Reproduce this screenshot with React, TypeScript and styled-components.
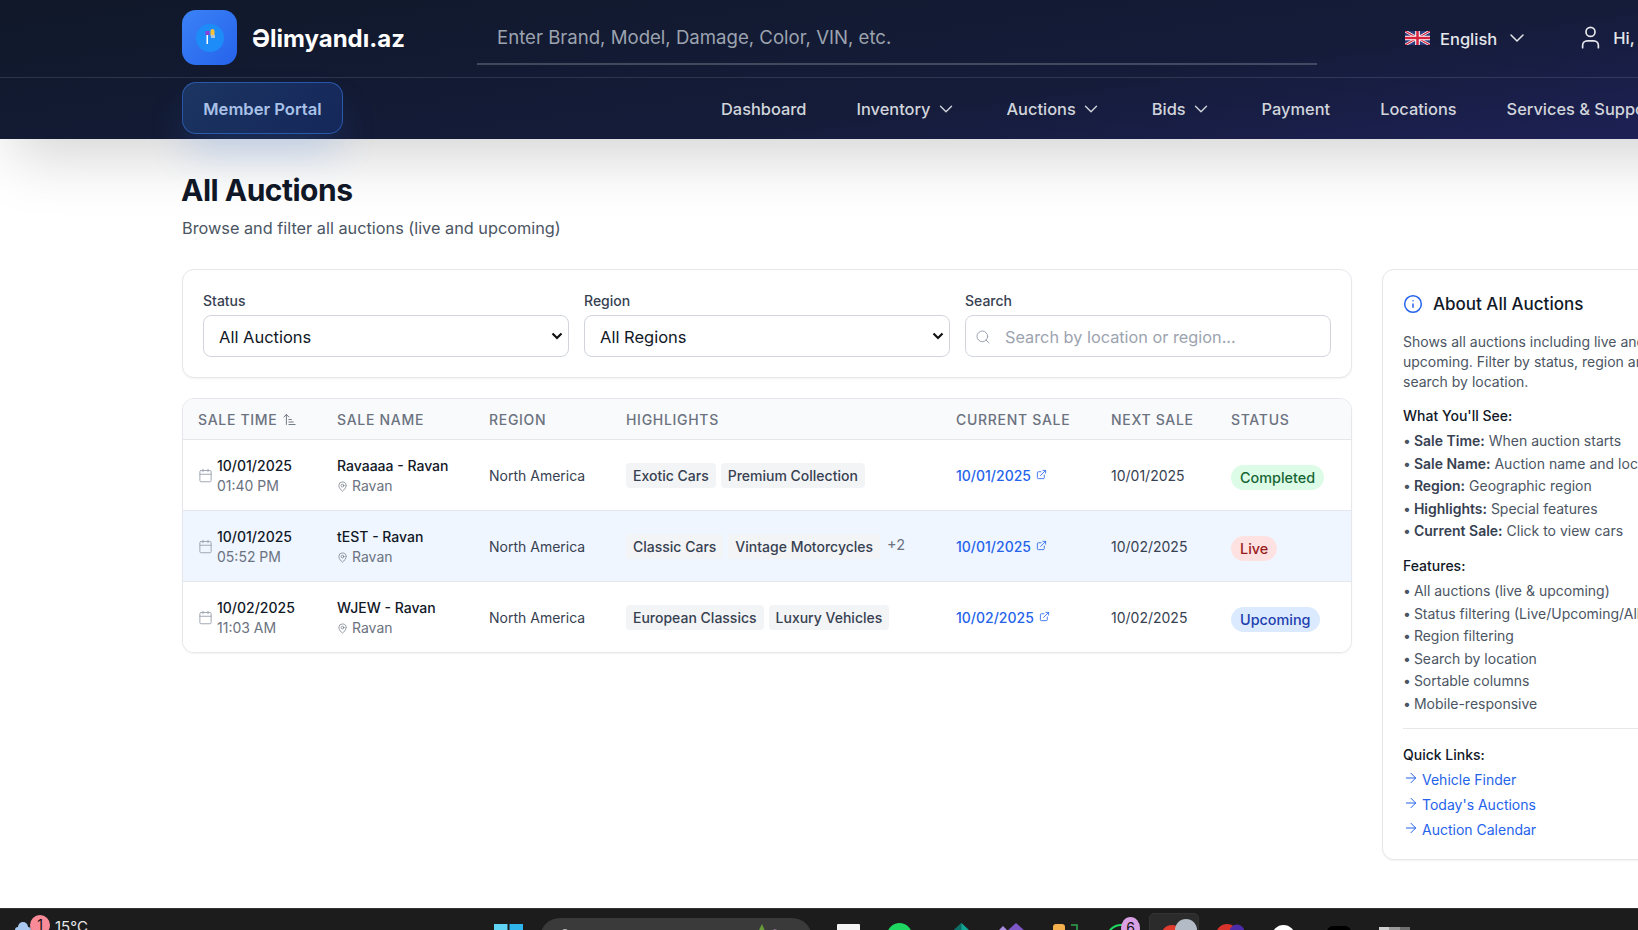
import React from "react";
import styled, {createGlobalStyle} from "styled-components";
import {ChevronDown, User, Search, Calendar, MapPin, ExternalLink, Info, ArrowRight, ArrowUpNarrowWide} from "lucide-react";

const GlobalStyle = createGlobalStyle`
  html, body {
    margin: 0;
    padding: 0;
    height: 930px;
    overflow: hidden;
    background: #fff;
    font-family: Inter, "Noto Sans", "Liberation Sans", sans-serif;
    color: #111827;
  }
  * {
    box-sizing: border-box;
  }
`;

const Page = styled.div`
  width: 1638px;
  height: 930px;
  display: flex;
  flex-direction: column;
  overflow: hidden;
`;

const Header = styled.header`
  position: relative;
  z-index: 2;
  flex: none;
  width: 1800px;
  height: 139px;
  background: linear-gradient(172deg, #101829 0%, #151c3a 60%, #1f2159 100%);
  box-shadow: 0 30px 60px -12px rgba(0, 0, 0, 0.17);
`;

const TopBar = styled.div`
  height: 78px;
  padding: 10px 0 0 182px;
  display: flex;
  align-items: flex-start;
  border-bottom: 1px solid rgba(255, 255, 255, 0.12);
`;

const Logo = styled.div`
  width: 55px;
  height: 55px;
  flex: none;
  border-radius: 14px;
  background: linear-gradient(135deg, #3b82f6, #2563eb);
  display: flex;
  align-items: center;
  justify-content: center;
`;

const Brand = styled.div`
  width: 225px;
  flex: none;
  margin-left: 15px;
  height: 55px;
  line-height: 57px;
  font-size: 24px;
  font-weight: 700;
  color: #fff;
`;

const TopSearch = styled.div`
  width: 840px;
  flex: none;
  height: 55px;
  padding: 0 20px;
  line-height: 54px;
  border-bottom: 2px solid rgba(255, 255, 255, 0.2);
  font-size: 18.6px;
  color: #9ca3af;
`;

const Lang = styled.div`
  margin-left: 88px;
  flex: none;
  height: 55px;
  display: flex;
  align-items: center;
  color: #e5e7eb;
  font-size: 16.5px;
  font-weight: 500;
`;

const LangName = styled.span`
  margin: 2px 8px 0 10px;
`;

const Greeting = styled.div`
  margin-left: 48px;
  flex: none;
  height: 55px;
  display: flex;
  align-items: center;
  gap: 9px;
  color: #e5e7eb;
  font-size: 16.5px;
  font-weight: 500;
  white-space: nowrap;
`;

const NavBar = styled.nav`
  height: 61px;
  padding: 4px 0 0 182px;
  display: flex;
  align-items: flex-start;
`;

const PortalButton = styled.div`
  width: 161px;
  height: 52px;
  flex: none;
  padding-top: 2px;
  border-radius: 14px;
  border: 1px solid rgba(59, 130, 246, 0.5);
  background: linear-gradient(135deg, #1c3561, #14275a);
  box-shadow: 0 22px 40px -6px rgba(59, 130, 246, 0.22);
  color: #a9c1e8;
  font-size: 16.6px;
  font-weight: 600;
  display: flex;
  align-items: center;
  justify-content: center;
`;

const NavLinks = styled.div`
  margin-left: 378px;
  flex: none;
  height: 52px;
  padding-top: 2px;
  display: flex;
  align-items: center;
  gap: 50px;
  white-space: nowrap;
`;

const NavLink = styled.span`
  display: flex;
  align-items: center;
  gap: 4px;
  color: #d1d5db;
  font-size: 16.4px;
  font-weight: 500;
`;

const Main = styled.main`
  flex: 1;
  padding: 30px 0 0 182px;
  min-height: 0;
`;

const Title = styled.h1`
  margin: 0 0 0 -1px;
  font-size: 30px;
  line-height: 42px;
  font-weight: 700;
  letter-spacing: -0.5px;
  color: #111827;
`;

const Subtitle = styled.p`
  margin: 3px 0 0;
  font-size: 16.3px;
  line-height: 28px;
  color: #4b5563;
`;

const Columns = styled.div`
  margin-top: 27px;
  display: flex;
  align-items: flex-start;
  gap: 30px;
`;

const Left = styled.div`
  width: 1170px;
  flex: none;
`;

const Card = styled.section`
  background: #fff;
  border: 1px solid #e5e7eb;
  border-radius: 12px;
  box-shadow: 0 1px 2px rgba(0, 0, 0, 0.05);
`;

const Filters = styled(Card)`
  height: 109px;
  padding: 20px;
  display: grid;
  grid-template-columns: repeat(3, 1fr);
  gap: 15px;
`;

const Field = styled.div`
  display: flex;
  flex-direction: column;
`;

const FieldLabel = styled.label`
  height: 25px;
  line-height: 21px;
  font-size: 14px;
  font-weight: 500;
  color: #374151;
`;

const Select = styled.select`
  width: 100%;
  height: 42px;
  padding: 2px 30px 0 15px;
  border: 1px solid #d1d5db;
  border-radius: 8px;
  appearance: none;
  background-color: #fff;
  background-image: url("data:image/svg+xml,%3Csvg xmlns='http://www.w3.org/2000/svg' width='12' height='8' viewBox='0 0 12 8'%3E%3Cpath d='M1.5 1.5L6 6l4.5-4.5' fill='none' stroke='%23111' stroke-width='2.2'/%3E%3C/svg%3E");
  background-repeat: no-repeat;
  background-position: right 5px center;
  font-family: inherit;
  font-size: 16.5px;
  color: #111827;
`;

const SearchBox = styled.div`
  height: 42px;
  padding: 2px 15px 0 9px;
  border: 1px solid #d1d5db;
  border-radius: 8px;
  display: flex;
  align-items: center;
  gap: 14px;
  font-size: 16.3px;
  color: #9ca3af;
`;

const TableCard = styled(Card)`
  margin-top: 20px;
  overflow: hidden;
`;

const COLUMNS = "139px 152px 137px 330px 155px 120px 1fr";

const HeadRow = styled.div`
  height: 41px;
  display: grid;
  grid-template-columns: ${COLUMNS};
  align-items: center;
  padding-left: 15px;
  background: #f9fafb;
  border-bottom: 1px solid #e5e7eb;
`;

const HeadCell = styled.div`
  display: flex;
  align-items: center;
  gap: 5px;
  font-size: 14px;
  font-weight: 500;
  letter-spacing: 0.7px;
  color: #6b7280;
  white-space: nowrap;
`;

const Row = styled.div<{$active?: boolean}>`
  height: 71px;
  display: grid;
  grid-template-columns: ${COLUMNS};
  align-items: center;
  padding-left: 15px;
  background: ${(p) => (p.$active ? "#eff6ff" : "#fff")};
  border-bottom: 1px solid #e5e7eb;

  &:last-child {
    height: 70px;
    border-bottom: 0;
  }
`;

const TimeCell = styled.div`
  display: flex;
  align-items: center;
  gap: 4px;
  color: #9ca3af;
`;

const Stack = styled.div`
  padding-top: 2px;
  display: flex;
  flex-direction: column;
`;

const Strong = styled.span`
  font-size: 14px;
  line-height: 20px;
  font-weight: 500;
  color: #111827;
`;

const Muted = styled.span`
  display: flex;
  align-items: center;
  gap: 4px;
  font-size: 14px;
  line-height: 20px;
  color: #6b7280;
`;

const PinIcon = styled.span`
  display: flex;
  color: #6b7280;
`;

const Plain = styled.div`
  font-size: 14px;
  color: #374151;
`;

const Chips = styled.div`
  display: flex;
  align-items: center;
  gap: 5px;
  white-space: nowrap;
`;

const Chip = styled.span`
  height: 25px;
  padding: 0 7px;
  border-radius: 4px;
  background: #f3f4f6;
  line-height: 25px;
  font-size: 14px;
  font-weight: 500;
  color: #374151;
`;

const More = styled.span`
  margin: -3px 0 0 2px;
  font-size: 14.5px;
  color: #6b7280;
`;

const SaleLink = styled.div`
  display: flex;
  align-items: center;
  gap: 5px;
  font-size: 14px;
  font-weight: 500;
  color: #2563eb;

  svg {
    margin-top: -2px;
  }
`;

const STATUS = {
  Completed: {bg: "#dcfce7", fg: "#166534"},
  Live: {bg: "#fee2e2", fg: "#991b1b"},
  Upcoming: {bg: "#dbeafe", fg: "#1e40af"},
};

const Badge = styled.span<{$kind: keyof typeof STATUS}>`
  justify-self: start;
  height: 25px;
  margin-top: 4px;
  padding: 0 9px;
  border-radius: 13px;
  line-height: 26px;
  font-size: 14.4px;
  font-weight: 500;
  background: ${(p) => STATUS[p.$kind].bg};
  color: ${(p) => STATUS[p.$kind].fg};
`;

const Side = styled(Card)`
  width: 320px;
  height: 591px;
  flex: none;
  padding: 20px;
`;

const SideTitle = styled.h2`
  margin: 1px 0 15px;
  display: flex;
  align-items: center;
  gap: 10px;
  font-size: 17px;
  line-height: 26px;
  font-weight: 500;
  color: #111827;
  white-space: nowrap;
`;

const SideIcon = styled.span`
  display: flex;
  color: #2563eb;
`;

const SideText = styled.p`
  margin: 0 0 13px;
  font-size: 14px;
  line-height: 20px;
  color: #4b5563;
  white-space: nowrap;
`;

const SideHeading = styled.h3`
  margin: 0 0 3px;
  font-size: 14px;
  line-height: 22px;
  font-weight: 500;
  color: #111827;
`;

const SideList = styled.ul`
  list-style: none;
  margin: 0 0 12px;
  padding: 0;
  font-size: 14px;
  line-height: 22.6px;
  color: #4b5563;
  white-space: nowrap;

  b {
    font-weight: 600;
    color: #374151;
  }
`;

const Dot = styled.span`
  margin-right: 3px;
`;

const Divider = styled.hr`
  margin: 12px 0 15px;
  border: 0;
  border-top: 1px solid #e5e7eb;
`;

const LinkList = styled.div`
  margin-top: -2px;
`;

const QuickLink = styled.a`
  height: 25px;
  display: flex;
  align-items: center;
  gap: 3px;
  font-size: 14px;
  color: #2563eb;

  svg {
    margin-top: -2px;
  }
`;

const Taskbar = styled.footer`
  flex: none;
  height: 22px;
  background: #1c1c1c;
  border-top: 1px solid #333;
  overflow: hidden;
  display: flex;
  align-items: flex-start;
`;

const Weather = styled.div`
  position: relative;
  width: 494px;
  flex: none;
  padding: 8px 0 0 55px;
  font-size: 15px;
  line-height: 20px;
  color: #e5e7eb;

  svg {
    position: absolute;
    left: 15px;
    top: 12px;
  }
`;

const NotifyDot = styled.span`
  position: absolute;
  left: 30px;
  top: 6px;
  width: 20px;
  height: 20px;
  border-radius: 50%;
  background: #f98b98;
  color: #111;
  font-size: 14px;
  line-height: 20px;
  text-align: center;
`;

const TaskIcon = styled.div<{$ml: number; $mt: number}>`
  position: relative;
  flex: none;
  margin-left: ${(p) => p.$ml}px;
  margin-top: ${(p) => p.$mt}px;
  display: flex;
`;

const Pill = styled.div`
  flex: none;
  margin: 9px 0 0 17px;
  width: 272px;
  height: 40px;
  padding: 6px 17px 0 20px;
  border-radius: 20px;
  background: #3a3a3a;
  display: flex;
  justify-content: space-between;
  align-items: flex-start;
`;

const ActiveTile = styled.div`
  flex: none;
  margin: 4px 0 0 9px;
  width: 50px;
  height: 40px;
  padding: 4px 0 0 12px;
  border-radius: 5px;
  background: #2b2b2b;
  border: 1px solid #333;
`;

const CountBadge = styled.span`
  position: absolute;
  right: 0;
  top: -6px;
  width: 19px;
  height: 22px;
  border-radius: 50%;
  background: #d9a0e3;
  color: #111;
  font-size: 14px;
  line-height: 22px;
  text-align: center;
`;

const rows = [
    {
        date: "10/01/2025", time: "01:40 PM", name: "Ravaaaa - Ravan", chips: ["Exotic Cars", "Premium Collection"],
        current: "10/01/2025", next: "10/01/2025", status: "Completed" as const,
    },
    {
        date: "10/01/2025", time: "05:52 PM", name: "tEST - Ravan", chips: ["Classic Cars", "Vintage Motorcycles"], more: "+2",
        current: "10/01/2025", next: "10/02/2025", status: "Live" as const, active: true,
    },
    {
        date: "10/02/2025", time: "11:03 AM", name: "WJEW - Ravan", chips: ["European Classics", "Luxury Vehicles"],
        current: "10/02/2025", next: "10/02/2025", status: "Upcoming" as const,
    },
];

function LogoMark() {
    return (
        <svg width="28" height="28" viewBox="0 0 28 28">
            <circle cx="14" cy="14" r="14" fill="#1d8cf8"/>
            <rect x="10.5" y="9" width="1.5" height="11" fill="#fff"/>
            <rect x="9.5" y="7" width="4" height="4" fill="#8b3fd9"/>
            <rect x="14.5" y="5" width="4" height="8" rx="2" fill="#f8c23c"/>
            <rect x="15" y="11" width="4" height="3" fill="#a9c5e8"/>
        </svg>
    );
}

function UkFlag() {
    return (
        <svg width="25" height="14" viewBox="0 0 60 36" preserveAspectRatio="none">
            <rect width="60" height="36" fill="#2b3a7a"/>
            <path d="M0 0L60 36M60 0L0 36" stroke="#fff" strokeWidth="7"/>
            <path d="M0 0L60 36M60 0L0 36" stroke="#d4213d" strokeWidth="3"/>
            <path d="M30 0V36M0 18H60" stroke="#fff" strokeWidth="11"/>
            <path d="M30 0V36M0 18H60" stroke="#d4213d" strokeWidth="6"/>
        </svg>
    );
}

function App() {
    return (
        <Page>
            <GlobalStyle/>
            <Header>
                <TopBar>
                    <Logo><LogoMark/></Logo>
                    <Brand>Əlimyandı.az</Brand>
                    <TopSearch>Enter Brand, Model, Damage, Color, VIN, etc.</TopSearch>
                    <Lang>
                        <UkFlag/>
                        <LangName>English</LangName>
                        <ChevronDown size={24} strokeWidth={1.5}/>
                    </Lang>
                    <Greeting>
                        <User size={27} strokeWidth={1.5}/>
                        <span>Hi,</span>
                    </Greeting>
                </TopBar>
                <NavBar>
                    <PortalButton>Member Portal</PortalButton>
                    <NavLinks>
                        <NavLink>Dashboard</NavLink>
                        <NavLink>Inventory <ChevronDown size={22} strokeWidth={1.5}/></NavLink>
                        <NavLink>Auctions <ChevronDown size={22} strokeWidth={1.5}/></NavLink>
                        <NavLink>Bids <ChevronDown size={22} strokeWidth={1.5}/></NavLink>
                        <NavLink>Payment</NavLink>
                        <NavLink>Locations</NavLink>
                        <NavLink>Services &amp; Support</NavLink>
                    </NavLinks>
                </NavBar>
            </Header>
            <Main>
                <Title>All Auctions</Title>
                <Subtitle>Browse and filter all auctions (live and upcoming)</Subtitle>
                <Columns>
                    <Left>
                        <Filters>
                            <Field>
                                <FieldLabel>Status</FieldLabel>
                                <Select defaultValue="all"><option value="all">All Auctions</option></Select>
                            </Field>
                            <Field>
                                <FieldLabel>Region</FieldLabel>
                                <Select defaultValue="all"><option value="all">All Regions</option></Select>
                            </Field>
                            <Field>
                                <FieldLabel>Search</FieldLabel>
                                <SearchBox>
                                    <Search size={16} strokeWidth={1.5}/>
                                    <span>Search by location or region...</span>
                                </SearchBox>
                            </Field>
                        </Filters>
                        <TableCard>
                            <HeadRow>
                                <HeadCell>SALE TIME <ArrowUpNarrowWide size={15} strokeWidth={1.5}/></HeadCell>
                                <HeadCell>SALE NAME</HeadCell>
                                <HeadCell>REGION</HeadCell>
                                <HeadCell>HIGHLIGHTS</HeadCell>
                                <HeadCell>CURRENT SALE</HeadCell>
                                <HeadCell>NEXT SALE</HeadCell>
                                <HeadCell>STATUS</HeadCell>
                            </HeadRow>
                            {rows.map((row) => (
                                <Row key={row.name} $active={row.active}>
                                    <TimeCell>
                                        <Calendar size={15} strokeWidth={1.5}/>
                                        <Stack>
                                            <Strong>{row.date}</Strong>
                                            <Muted>{row.time}</Muted>
                                        </Stack>
                                    </TimeCell>
                                    <Stack>
                                        <Strong>{row.name}</Strong>
                                        <Muted><PinIcon><MapPin size={11} strokeWidth={1.5}/></PinIcon> Ravan</Muted>
                                    </Stack>
                                    <Plain>North America</Plain>
                                    <Chips>
                                        {row.chips.map((chip) => <Chip key={chip}>{chip}</Chip>)}
                                        {row.more && <More>{row.more}</More>}
                                    </Chips>
                                    <SaleLink>{row.current} <ExternalLink size={11} strokeWidth={1.8}/></SaleLink>
                                    <Plain>{row.next}</Plain>
                                    <Badge $kind={row.status}>{row.status}</Badge>
                                </Row>
                            ))}
                        </TableCard>
                    </Left>
                    <Side>
                        <SideTitle>
                            <SideIcon><Info size={20} strokeWidth={1.8}/></SideIcon>
                            About All Auctions
                        </SideTitle>
                        <SideText>
                            Shows all auctions including live and<br/>
                            upcoming. Filter by status, region and<br/>
                            search by location.
                        </SideText>
                        <SideHeading>What You'll See:</SideHeading>
                        <SideList>
                            <li><Dot>•</Dot><b>Sale Time:</b> When auction starts</li>
                            <li><Dot>•</Dot><b>Sale Name:</b> Auction name and location</li>
                            <li><Dot>•</Dot><b>Region:</b> Geographic region</li>
                            <li><Dot>•</Dot><b>Highlights:</b> Special features</li>
                            <li><Dot>•</Dot><b>Current Sale:</b> Click to view cars</li>
                        </SideList>
                        <SideHeading>Features:</SideHeading>
                        <SideList>
                            <li><Dot>•</Dot>All auctions (live &amp; upcoming)</li>
                            <li><Dot>•</Dot>Status filtering (Live/Upcoming/All)</li>
                            <li><Dot>•</Dot>Region filtering</li>
                            <li><Dot>•</Dot>Search by location</li>
                            <li><Dot>•</Dot>Sortable columns</li>
                            <li><Dot>•</Dot>Mobile-responsive</li>
                        </SideList>
                        <Divider/>
                        <SideHeading>Quick Links:</SideHeading>
                        <LinkList>
                            <QuickLink><ArrowRight size={16} strokeWidth={1.5}/> Vehicle Finder</QuickLink>
                            <QuickLink><ArrowRight size={16} strokeWidth={1.5}/> Today's Auctions</QuickLink>
                            <QuickLink><ArrowRight size={16} strokeWidth={1.5}/> Auction Calendar</QuickLink>
                        </LinkList>
                    </Side>
                </Columns>
            </Main>
            <Taskbar>
                <Weather>
                    <svg width="16" height="12" viewBox="0 0 16 12">
                        <path d="M3 12a3 3 0 0 1 0-6 5 5 0 0 1 10 0 3 3 0 0 1 0 6z" fill="#a9c8f0"/>
                    </svg>
                    <NotifyDot>1</NotifyDot>
                    15°C
                </Weather>
                <TaskIcon $ml={0} $mt={15}>
                    <svg width="29" height="20" viewBox="0 0 29 20">
                        <rect width="13.5" height="20" fill="#5fd4f4"/>
                        <rect x="15.5" width="13.5" height="20" fill="#2fb5ec"/>
                    </svg>
                </TaskIcon>
                <Pill>
                    <svg width="10" height="10" viewBox="0 0 10 10">
                        <circle cx="5" cy="10" r="4" fill="none" stroke="#eee" strokeWidth="1.6"/>
                    </svg>
                    <svg width="42" height="14" viewBox="0 0 42 14">
                        <path d="M2 14L9 0l6 14z" fill="#6a9c3a"/>
                        <circle cx="22" cy="9" r="3.5" fill="#c9b4cf"/>
                        <circle cx="30" cy="9" r="3" fill="#b79cc0"/>
                        <circle cx="38" cy="10" r="2.5" fill="#c9b4cf"/>
                    </svg>
                </Pill>
                <TaskIcon $ml={25} $mt={15}>
                    <svg width="23" height="16" viewBox="0 0 23 16"><rect width="23" height="16" rx="1" fill="#f4f4f4"/></svg>
                </TaskIcon>
                <TaskIcon $ml={27} $mt={14}>
                    <svg width="25" height="16" viewBox="0 0 25 16"><circle cx="12.5" cy="12.5" r="12.5" fill="#1ed760"/></svg>
                </TaskIcon>
                <TaskIcon $ml={41} $mt={14}>
                    <svg width="17" height="16" viewBox="0 0 17 16">
                        <path d="M0 8L8.5 0 17 8v8H0z" fill="#12a594"/>
                        <path d="M8.5 0L0 8v8h8.5z" fill="#0b6f66"/>
                    </svg>
                </TaskIcon>
                <TaskIcon $ml={28} $mt={14}>
                    <svg width="27" height="16" viewBox="0 0 27 16">
                        <path d="M0 8l5-5 5 5v8H0z" fill="#a58ae0"/>
                        <path d="M9 8l9-8 9 8v8H9z" fill="#7e57c8"/>
                    </svg>
                </TaskIcon>
                <TaskIcon $ml={28} $mt={15}>
                    <svg width="25" height="16" viewBox="0 0 25 16">
                        <path d="M0 16V3a3 3 0 0 1 3-3h6a3 3 0 0 1 3 3v13z" fill="#f3b04c"/>
                        <path d="M18 1h6v15" fill="none" stroke="#2ea44f" strokeWidth="1.6"/>
                    </svg>
                </TaskIcon>
                <TaskIcon $ml={28} $mt={14}>
                    <svg width="34" height="16" viewBox="0 0 34 16">
                        <path d="M1 16a14 14 0 0 1 15-14" fill="none" stroke="#1ed760" strokeWidth="2"/>
                    </svg>
                    <CountBadge>6</CountBadge>
                </TaskIcon>
                <ActiveTile>
                    <svg width="36" height="30" viewBox="0 0 36 30">
                        <circle cx="10" cy="18" r="11" fill="#e23b2e"/>
                        <circle cx="24" cy="12" r="11" fill="#b3bcc6"/>
                    </svg>
                </ActiveTile>
                <TaskIcon $ml={17} $mt={11}>
                    <svg width="28" height="20" viewBox="0 0 28 20">
                        <circle cx="11" cy="15" r="11" fill="#d8342c"/>
                        <circle cx="21" cy="12" r="7.5" fill="#4c2ca8"/>
                    </svg>
                </TaskIcon>
                <TaskIcon $ml={28} $mt={16}>
                    <svg width="23" height="16" viewBox="0 0 23 16"><circle cx="11.5" cy="11.5" r="11.5" fill="#fff"/></svg>
                </TaskIcon>
                <TaskIcon $ml={32} $mt={17}>
                    <svg width="24" height="16" viewBox="0 0 24 16"><rect width="24" height="20" rx="6" fill="#000"/></svg>
                </TaskIcon>
                <TaskIcon $ml={28} $mt={18}>
                    <svg width="31" height="16" viewBox="0 0 31 16">
                        <rect width="10" height="16" fill="#cfcfcf"/>
                        <rect x="10" width="11" height="16" fill="#9a9a9a"/>
                        <rect x="21" width="10" height="16" fill="#6f6f6f"/>
                    </svg>
                </TaskIcon>
            </Taskbar>
        </Page>
    );
}

export default App;
